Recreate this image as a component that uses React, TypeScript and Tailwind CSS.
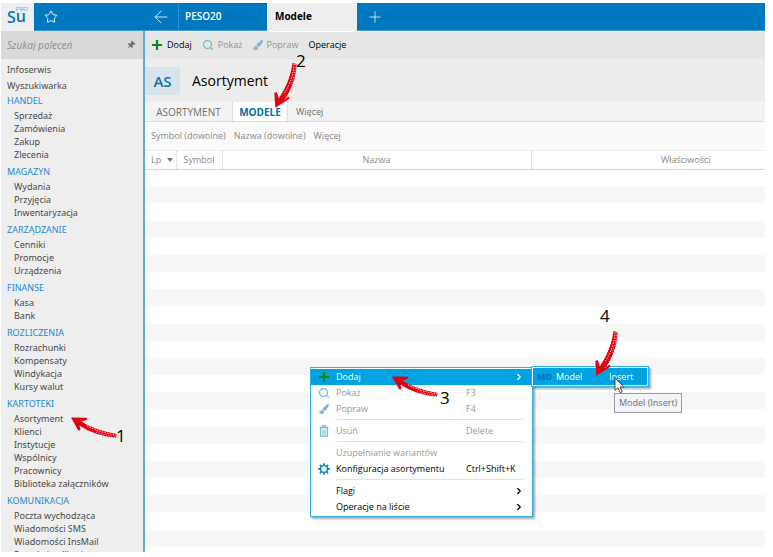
import { ReactNode } from "react";
import { ArrowLeft, ChevronRight, Plus, Search, Star } from "lucide-react";
import { FaPaintBrush, FaThumbtack } from "react-icons/fa";

const SIDEBAR_GROUPS = [
  { title: "HANDEL", items: ["Sprzedaż", "Zamówienia", "Zakup", "Zlecenia"] },
  { title: "MAGAZYN", items: ["Wydania", "Przyjęcia", "Inwentaryzacja"] },
  { title: "ZARZĄDZANIE", items: ["Cenniki", "Promocje", "Urządzenia"] },
  { title: "FINANSE", items: ["Kasa", "Bank"] },
  { title: "ROZLICZENIA", items: ["Rozrachunki", "Kompensaty", "Windykacja", "Kursy walut"] },
  {
    title: "KARTOTEKI",
    items: ["Asortyment", "Klienci", "Instytucje", "Wspólnicy", "Pracownicy", "Biblioteka załączników"],
  },
  {
    title: "KOMUNIKACJA",
    items: ["Poczta wychodząca", "Wiadomości SMS", "Wiadomości InsMail", "Portale i aplikacje"],
  },
];

const EMPTY_ROWS = Array.from({ length: 22 }, (_, i) => i);

function PlusIcon() {
  return (
    <svg viewBox="0 0 12 12" className="size-3 shrink-0" aria-hidden>
      <path d="M6 1v10M1 6h10" stroke="#0b8a1c" strokeWidth="2.2" />
    </svg>
  );
}

function GearIcon() {
  return (
    <svg viewBox="0 0 24 24" className="size-3 shrink-0" fill="none" stroke="#0d85b8" aria-hidden>
      <circle cx="12" cy="12" r="6.8" strokeWidth="2.8" />
      <path
        d="M12 0.5v4M12 19.5v4M0.5 12h4M19.5 12h4M3.9 3.9l2.8 2.8M17.3 17.3l2.8 2.8M3.9 20.1l2.8-2.8M17.3 6.7l2.8-2.8"
        strokeWidth="3.6"
      />
    </svg>
  );
}

function BinIcon() {
  return (
    <svg viewBox="0 0 10 12" className="h-3 w-2.5 shrink-0" fill="none" stroke="#79b8d6" aria-hidden>
      <path d="M0.5 2.5h9M3.5 2V0.8h3V2" strokeWidth="1.3" />
      <path d="M1.7 3v8.2h6.6V3" strokeWidth="1.3" />
      <path d="M4 4.5v5.5M6 4.5v5.5" strokeWidth="1.1" />
    </svg>
  );
}

function Sidebar() {
  return (
    <aside className="flex w-36 shrink-0 flex-col border-r-2 border-[#5badd8] bg-[#eeeeee] font-['Noto_Sans',sans-serif]">
      <div className="flex h-7 shrink-0 items-center bg-[#d9d9d9] pl-1.5 pr-2">
        <input
          type="text"
          aria-label="Szukaj poleceń"
          placeholder="Szukaj poleceń"
          className="min-w-0 flex-1 bg-transparent text-[10px] italic outline-none placeholder:text-[#929292]"
        />
        <FaThumbtack className="size-2 rotate-45 text-[#707070]" aria-hidden />
      </div>
      <nav className="min-h-0 flex-1 overflow-hidden pl-1.5 pt-[3px] text-[#4a4a4a]">
        <a href="#infoserwis" className="block leading-4">Infoserwis</a>
        <a href="#wyszukiwarka" className="block leading-[15px]">Wyszukiwarka</a>
        {SIDEBAR_GROUPS.map((group) => (
          <section key={group.title} className="mb-[3px]">
            <h2 className="mb-px leading-[15px] text-[#1d8ad2]">{group.title}</h2>
            <ul className="pl-[7px]">
              {group.items.map((item) => (
                <li key={item} className="h-[13px] leading-[13px]">
                  <a href="#lista" className="whitespace-nowrap">{item}</a>
                </li>
              ))}
            </ul>
          </section>
        ))}
      </nav>
    </aside>
  );
}

function TopBar() {
  return (
    <header className="flex h-7 shrink-0 border-b border-[#3d9bd3] bg-[#0077be] text-white">
      <div className="flex w-[143px] shrink-0 items-center">
        <div className="flex h-7 w-[33px] items-center bg-[#eeeeee] pl-1.5 font-semibold text-[#0077be]">
          <span className="text-base leading-4">S</span>
          <span className="flex flex-col pb-[5px]">
            <span className="text-[6px] font-normal leading-[5px] text-[#6aa8d0]">PRO</span>
            <span className="text-base leading-[9px]">u</span>
          </span>
        </div>
        <button type="button" aria-label="Ulubione" className="ml-2.5">
          <Star className="size-3.5" strokeWidth={1.6} />
        </button>
      </div>
      <button type="button" aria-label="Wstecz" className="flex w-[34px] items-center justify-center">
        <ArrowLeft className="size-5" strokeWidth={1} />
      </button>
      <button
        type="button"
        className="w-[89px] border-l border-t border-l-[#2e90cb] border-t-[#b3285a] pb-0.5 pl-1.5 text-left text-[10px] font-semibold"
      >
        PESO20
      </button>
      <button type="button" className="h-7 w-[90px] bg-[#eeeeee] pb-0.5 pl-2 text-left text-[10px] font-bold text-black">
        Modele
      </button>
      <button type="button" aria-label="Nowa karta" className="flex w-9 items-center justify-center">
        <Plus className="size-[18px]" strokeWidth={1} />
      </button>
    </header>
  );
}

function Toolbar() {
  return (
    <div className="flex h-7 shrink-0 items-center gap-2.5 border-t border-white bg-[#e6e6e6] pb-0.5 pl-1.5 text-[#929292]">
      <button type="button" className="flex items-center gap-1 text-black">
        <PlusIcon />
        Dodaj
      </button>
      <button type="button" className="flex items-center gap-1">
        <Search className="size-3 text-[#79b8d6]" strokeWidth={2.5} />
        Pokaż
      </button>
      <button type="button" className="flex items-center gap-1">
        <FaPaintBrush className="size-2.5 text-[#79b8d6]" />
        Popraw
      </button>
      <button type="button" className="text-black">Operacje</button>
    </div>
  );
}

function ModelsTable() {
  return (
    <div className="min-h-0 flex-1 overflow-hidden border-t border-[#eeeeee] pb-[5px]">
      <table className="h-full w-full min-w-[695px] table-fixed border-collapse text-[#8a8a8a]">
        <colgroup>
          <col className="w-[31px]" />
          <col className="w-[46px]" />
          <col />
          <col />
        </colgroup>
        <thead>
          <tr className="h-[18px] border-b border-[#d4d4d4]">
            <th className="border-r border-dotted border-r-[#cfcfcf] p-0 font-normal">
              <span className="flex items-center gap-1.5 pl-1.5">
                Lp
                <svg viewBox="0 0 6 4" className="h-1 w-1.5" aria-hidden>
                  <path d="M0 0h6L3 4z" fill="#777777" />
                </svg>
              </span>
            </th>
            <th className="border-r border-dotted border-r-[#cfcfcf] p-0 font-normal">Symbol</th>
            <th className="border-r border-dotted border-r-[#cfcfcf] p-0 font-normal">Nazwa</th>
            <th className="p-0 font-normal">Właściwości</th>
          </tr>
        </thead>
        <tbody>
          {EMPTY_ROWS.map((row) => (
            <tr key={row} className="h-[17px] even:bg-[#f7f7f7]">
              <td colSpan={4} className="p-0" />
            </tr>
          ))}
        </tbody>
      </table>
    </div>
  );
}

interface MenuRowProps {
  icon?: ReactNode;
  label: string;
  shortcut?: string;
  submenu?: boolean;
  active?: boolean;
  disabled?: boolean;
}

function MenuRow({ icon, label, shortcut, submenu, active, disabled }: MenuRowProps) {
  const color = active ? "bg-[#00a2e0] text-white" : disabled ? "text-[#9a9a9a]" : "text-black";
  return (
    <button type="button" role="menuitem" disabled={disabled} className={`flex h-4 w-full items-center text-left ${color}`}>
      <span className="flex w-[25px] shrink-0 items-center justify-center">{icon}</span>
      <span className="w-[130px] shrink-0">{label}</span>
      <span className="flex-1 whitespace-nowrap">{shortcut}</span>
      {submenu && <ChevronRight className="mr-2 size-2.5" strokeWidth={3} />}
    </button>
  );
}

function MenuSeparator() {
  return <div role="separator" className="mb-[3px] ml-[26px] mr-2 mt-0.5 h-px bg-[#e2e2e2]" />;
}

function ContextMenu() {
  return (
    <div
      role="menu"
      className="absolute left-[310px] top-[367px] w-[223px] border border-[#2fb0e4] bg-white py-px shadow-[2px_2px_2px_rgba(0,0,0,0.35)]"
    >
      <MenuRow icon={<PlusIcon />} label="Dodaj" submenu active />
      <MenuRow icon={<Search className="size-3 text-[#79b8d6]" strokeWidth={2.5} />} label="Pokaż" shortcut="F3" disabled />
      <MenuRow icon={<FaPaintBrush className="size-2.5 text-[#79b8d6]" />} label="Popraw" shortcut="F4" disabled />
      <MenuSeparator />
      <MenuRow icon={<BinIcon />} label="Usuń" shortcut="Delete" disabled />
      <MenuSeparator />
      <MenuRow label="Uzupełnianie wariantów" disabled />
      <MenuRow icon={<GearIcon />} label="Konfiguracja asortymentu" shortcut="Ctrl+Shift+K" />
      <MenuSeparator />
      <MenuRow label="Flagi" submenu />
      <MenuRow label="Operacje na liście" submenu />
    </div>
  );
}

function SubMenu() {
  return (
    <div
      role="menu"
      className="absolute left-[531px] top-[366px] w-[118px] border border-[#2fb0e4] bg-white p-px shadow-[2px_2px_2px_rgba(0,0,0,0.35)]"
    >
      <button type="button" role="menuitem" className="flex h-[17px] w-full items-center bg-[#00a2e0] pl-1 text-left text-white">
        <span className="w-[19px] font-bold text-[#0077be]">MD</span>
        <span className="w-[53px]">Model</span>
        <span>Insert</span>
      </button>
    </div>
  );
}

// Brush stroke arrow: "left" has its tip at the top-left corner, "down" at the bottom-left one.
function BrushArrow({ direction, className }: { direction: "left" | "down"; className: string }) {
  if (direction === "left") {
    return (
      <svg viewBox="0 0 48 24" className={`absolute h-6 w-12 ${className}`} aria-hidden>
        <path
          d="M1 2.5L17 2.8L17.5 4.6L11.5 6.5C19 11.5 30 16 47 19L46 22.5C32 21.5 20 17.5 9.5 10.5L10.5 15L8.3 15.6Z"
          fill="#e3000f"
        />
        <path d="M17 10.8C26 15.5 36 18.5 47 20" fill="none" stroke="#ffffff" strokeWidth="0.8" strokeDasharray="1.5 1.2" />
        <path d="M26 17C33 19.5 39 20.8 47 21.6" fill="none" stroke="#ffffff" strokeWidth="0.7" strokeDasharray="1 1.6" />
      </svg>
    );
  }
  return (
    <svg viewBox="0 0 28 50" className={`absolute h-[50px] w-7 ${className}`} aria-hidden>
      <path
        d="M3.3 47.8L2.3 33L4.8 32L6.8 38.5C13 29 18.5 18 20.5 3L24.5 4C24 18 19.5 30 12 40.5L16.2 36.5L17.8 38.5Z"
        fill="#e3000f"
      />
      <path d="M22 4C21.5 15 17.5 25 12.5 33" fill="none" stroke="#ffffff" strokeWidth="0.8" strokeDasharray="1.5 1.2" />
      <path d="M23.6 4C23.2 12 21.5 19 19 25" fill="none" stroke="#ffffff" strokeWidth="0.7" strokeDasharray="1 1.6" />
    </svg>
  );
}

function StepNumber({ value, className }: { value: number; className: string }) {
  return <span className={`absolute text-[17px] leading-5 text-black ${className}`}>{value}</span>;
}

function MousePointer() {
  return (
    <svg viewBox="0 0 12 18" className="absolute left-[614px] top-[377px] h-[18px] w-3" aria-hidden>
      <path d="M1 1v12.5l3-2.8 2.2 5 2-0.9L6 10h4.2z" fill="#ffffff" stroke="#333333" strokeWidth="0.9" />
    </svg>
  );
}

export default function App() {
  return (
    <div className="relative h-screen overflow-hidden bg-white pb-[5px] pl-px pr-2 pt-[3px] font-['Open_Sans','Noto_Sans',sans-serif] text-[9px] leading-3">
      <div className="flex h-full flex-col">
        <TopBar />
        <div className="flex min-h-0 flex-1">
          <Sidebar />
          <main className="flex min-w-0 flex-1 flex-col">
            <Toolbar />
            <div className="flex h-[43px] shrink-0 items-center gap-3 bg-[#ececec]">
              <span className="flex h-7 w-[35px] items-center justify-center bg-[#d8e3ea] text-[15px] font-semibold text-[#0d72b5]">AS</span>
              <h1 className="text-sm leading-4 text-black">Asortyment</h1>
            </div>
            <div role="tablist" className="flex h-5 shrink-0 items-stretch border-b border-[#dddddd] bg-[#f3f3f3] text-[#6f6f6f]">
              <button type="button" role="tab" className="w-[87px] text-[10px]">ASORTYMENT</button>
              <button
                type="button"
                role="tab"
                aria-selected
                className="w-14 border-x border-[#dddddd] bg-white text-[10px] font-bold text-[#0072a8]"
              >
                MODELE
              </button>
              <button type="button" role="tab" className="px-2">Więcej</button>
            </div>
            <div className="flex h-7 shrink-0 items-center gap-2 bg-[#fafafa] pl-1.5 text-[#8a8a8a]">
              <button type="button">Symbol (dowolne)</button>
              <button type="button">Nazwa (dowolne)</button>
              <button type="button">Więcej</button>
            </div>
            <ModelsTable />
          </main>
        </div>
      </div>
      <ContextMenu />
      <SubMenu />
      <div role="tooltip" className="absolute left-[614px] top-[393px] border border-[#9a9a9a] bg-[#f3f3f8] px-1 py-[3px] text-[#6f6f6f]">
        Model (Insert)
      </div>
      <MousePointer />
      <BrushArrow direction="left" className="left-[70px] top-[415px]" />
      <StepNumber value={1} className="left-[116px] top-[426px]" />
      <BrushArrow direction="down" className="left-[272px] top-[60px]" />
      <StepNumber value={2} className="left-[296px] top-[51px]" />
      <BrushArrow direction="left" className="left-[391px] top-[374px]" />
      <StepNumber value={3} className="left-[440px] top-[388px]" />
      <BrushArrow direction="down" className="left-[593px] top-[328px]" />
      <StepNumber value={4} className="left-[600px] top-[306px]" />
    </div>
  );
}
